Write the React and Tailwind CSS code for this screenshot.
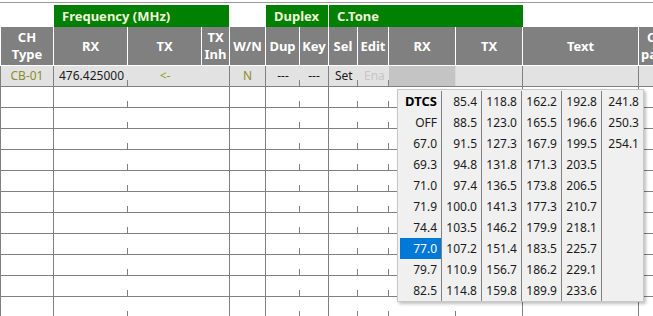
import React from "react";

const TICK =
  "bg-[linear-gradient(#808080,#808080)] bg-no-repeat bg-[length:1px_6px] bg-right-bottom";

const popupCols = [
  ["DTCS", "OFF", "67.0", "69.3", "71.0", "71.9", "74.4", "77.0", "79.7", "82.5"],
  ["85.4", "88.5", "91.5", "94.8", "97.4", "100.0", "103.5", "107.2", "110.9", "114.8"],
  ["118.8", "123.0", "127.3", "131.8", "136.5", "141.3", "146.2", "151.4", "156.7", "159.8"],
  ["162.2", "165.5", "167.9", "171.3", "173.8", "177.3", "179.9", "183.5", "186.2", "189.9"],
  ["192.8", "196.6", "199.5", "203.5", "206.5", "210.7", "218.1", "225.7", "229.1", "233.6"],
  ["241.8", "250.3", "254.1"],
];

function EmptyRow() {
  return (
    <div className="grid grid-cols-[1px_53px_74px_74px_28px_36px_34px_29px_29px_31px_67px_67px_116px_100px] h-[21px] border-b border-[#808080]">
      <div className="bg-[#808080]" />
      <div className="border-r border-[#808080]" />
      <div className={TICK} />
      <div />
      <div className="border-r border-[#808080]" />
      <div className="border-r border-[#808080]" />
      <div className={TICK} />
      <div className="border-r border-[#808080]" />
      <div className={TICK} />
      <div className={TICK} />
      <div className={TICK} />
      <div className="border-r border-[#808080]" />
      <div className="border-r border-[#808080]" />
      <div />
    </div>
  );
}

export default function App() {
  return (
    <div className="relative w-[653px] h-[316px] overflow-hidden bg-white font-['Noto_Sans',sans-serif] text-[12px] text-[#1a1a1a]">
      {/* top rule */}
      <div className="h-[2px]" />
      <div className="h-px bg-[#9a9a9a]" />
      <div className="h-[2px]" />

      {/* group header */}
      <div className="grid grid-cols-[1px_53px_74px_74px_28px_36px_34px_29px_29px_31px_67px_67px_116px_100px] h-[22px] font-bold text-[13px] text-[#f2f4d8] leading-[22px]">
        <div className="col-span-2" />
        <div className="col-span-3 bg-[#008000] border-r border-white pl-[8px]">Frequency (MHz)</div>
        <div />
        <div className="col-span-2 bg-[#008000] border-r border-white pl-[8px]">Duplex</div>
        <div className="col-span-4 bg-[#008000] pl-[8px]">C.Tone</div>
        <div className="col-span-2" />
      </div>

      {/* column header */}
      <div className="grid grid-cols-[1px_53px_74px_74px_28px_36px_34px_29px_29px_31px_67px_67px_116px_100px] h-[39px] bg-[#808080] border-b border-white font-bold text-[13px] text-white leading-[17px] text-center">
        <div className="bg-white" />
        <div className="border-r border-white flex flex-col justify-center">
          <span>CH</span>
          <span>Type</span>
        </div>
        <div className="border-r border-white flex items-center justify-center">RX</div>
        <div className="border-r border-white flex items-center justify-center">TX</div>
        <div className="border-r border-white flex flex-col justify-center overflow-hidden">
          <span>TX</span>
          <span>Inh</span>
        </div>
        <div className="border-r border-white flex items-center justify-center">W/N</div>
        <div className="border-r border-white flex items-center justify-center">Dup</div>
        <div className="border-r border-white flex items-center justify-center">Key</div>
        <div className="border-r border-white flex items-center justify-center">Sel</div>
        <div className="border-r border-white flex items-center justify-center">Edit</div>
        <div className="border-r border-white flex items-center justify-center">RX</div>
        <div className="border-r border-white flex items-center justify-center">TX</div>
        <div className="border-r border-white flex items-center justify-center">Text</div>
        <div className="flex flex-col justify-center text-left">
          <span className="pl-[8px]">C</span>
          <span className="pl-[2px]">pa</span>
        </div>
      </div>

      {/* data row */}
      <div className="grid grid-cols-[1px_53px_74px_74px_28px_36px_34px_29px_29px_31px_67px_67px_116px_100px] h-[21px] bg-[#e2e2e2] border-b border-[#808080] leading-[20px]">
        <div className="bg-[#808080]" />
        <div className="border-r border-[#808080] text-center text-[#8b8b2a]">CB-01</div>
        <div className={`${TICK} pl-[5px]`}>476.425000</div>
        <div className="text-center text-[#8b9a2a]">&lt;-</div>
        <div className="border-r border-[#808080]" />
        <div className="border-r border-[#808080] text-center text-[#8b8b2a]">N</div>
        <div className={`${TICK} text-center`}>---</div>
        <div className="border-r border-[#808080] text-center">---</div>
        <div className={`${TICK} pl-[6px]`}>Set</div>
        <div className={`${TICK} pl-[6px] text-[#c6c6c6]`}>Ena</div>
        <div className="bg-[#c4c4c4] border-r border-[#d8d8d8]" />
        <div className="border-r border-[#808080]" />
        <div className="border-r border-[#808080]" />
        <div />
      </div>

      {Array.from({ length: 11 }).map((_, i) => (
        <EmptyRow key={i} />
      ))}

      {/* CTCSS dropdown */}
      <div className="absolute left-[397px] top-[89px] w-[247px] h-[213px] bg-[#f0f0f0] border border-[#c8c8c8] shadow-[2px_2px_3px_rgba(0,0,0,0.25)] flex pl-[2px] pt-px text-[12px] leading-[21px]">
        {popupCols.map((col, ci) => (
          <div
            key={ci}
            className={
              ci === 0
                ? "w-[42px] border-r border-[#808080] flex flex-col"
                : ci === 5
                ? "w-[41px] flex flex-col"
                : "w-[40px] border-r border-[#808080] flex flex-col"
            }
          >
            {col.map((v, ri) => (
              <div
                key={ri}
                className={
                  ci === 0 && ri === 7
                    ? "h-[21px] text-right pr-[4px] bg-[#0078d7] text-white"
                    : ci === 0 && ri === 0
                    ? "h-[21px] text-right pr-[4px] font-bold text-[13px] text-black"
                    : "h-[21px] text-right pr-[4px]"
                }
              >
                {v}
              </div>
            ))}
          </div>
        ))}
      </div>
    </div>
  );
}
